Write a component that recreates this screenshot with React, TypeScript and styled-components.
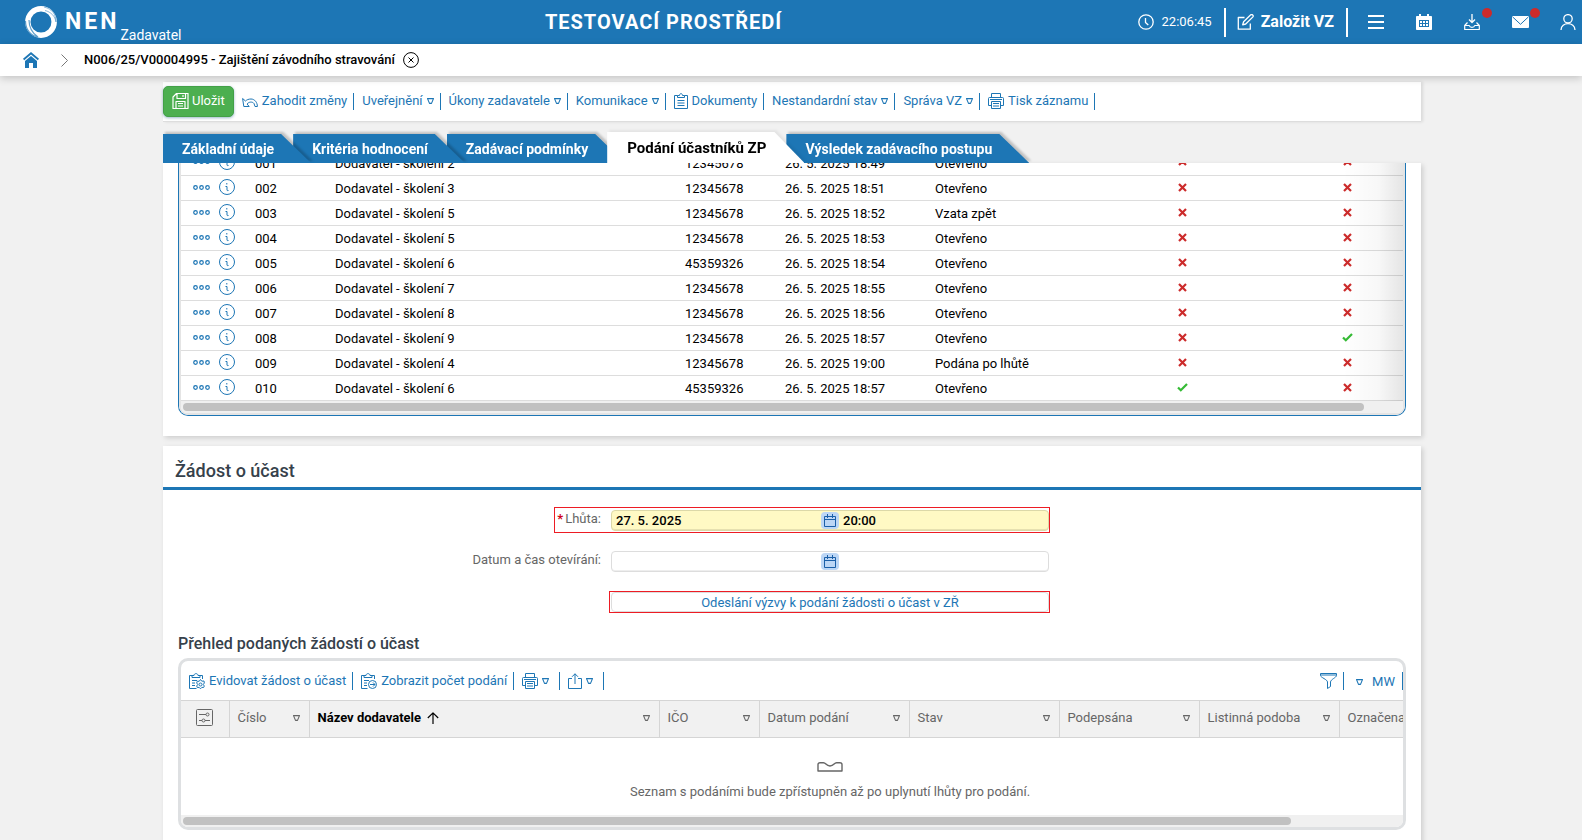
import React from 'react';
import styled, { createGlobalStyle, css } from 'styled-components';

const BLUE = '#1d76b5';
const GREY_BG = '#f1f1f1';

const GlobalStyle = createGlobalStyle`
  *, *::before, *::after { box-sizing: border-box; }
  body {
    margin: 0;
    background: ${GREY_BG};
    color: #000;
    font: 13px/16px Roboto, "Liberation Sans", sans-serif;
  }
  button, input { font: inherit; color: inherit; }
  svg { display: block; flex: none; }
`;

const Page = styled.div`
  display: flex;
  flex-direction: column;
  min-height: 100vh;
`;

/* ---------- header ---------- */

const Header = styled.header`
  display: flex;
  align-items: center;
  justify-content: space-between;
  height: 44px;
  padding: 0 6px 0 24px;
  background: ${BLUE};
  color: #fff;
`;

const Brand = styled.a`
  display: flex;
  align-items: center;
  height: 44px;
  color: inherit;
  text-decoration: none;
`;

const BrandName = styled.span`
  padding-left: 7px;
  font-size: 23px;
  font-weight: 700;
  letter-spacing: 3px;
`;

const BrandRole = styled.span`
  align-self: flex-end;
  padding: 0 8px 1px 1px;
  font-size: 14px;
`;

const EnvTitle = styled.strong`
  font-size: 20px;
  font-weight: 700;
  letter-spacing: 1px;
`;

const HeaderRight = styled.div`
  display: flex;
  align-items: center;
  justify-content: flex-end;
`;

const Clock = styled.div`
  display: flex;
  align-items: center;
  gap: 8px;
  height: 29px;
  padding-right: 12px;
`;

const CreateButton = styled.button`
  display: flex;
  align-items: center;
  gap: 7px;
  height: 29px;
  margin-right: 20px;
  padding: 0 12px 0 11px;
  border: 0;
  border-left: 2px solid #fff;
  border-right: 2px solid #fff;
  background: none;
  font-size: 16px;
  font-weight: 700;
`;

const HeaderIcons = styled.div`
  display: flex;
  gap: 32px;
`;

const HeaderIcon = styled.button<{ $alert?: boolean }>`
  position: relative;
  width: 16px;
  padding: 0;
  border: 0;
  background: none;
  ${p => p.$alert && css`
    &::after {
      content: '';
      position: absolute;
      top: -6px;
      right: -12px;
      width: 10px;
      height: 10px;
      border-radius: 50%;
      background: #cc2b2b;
    }
  `}
`;

/* ---------- breadcrumb ---------- */

const Breadcrumb = styled.nav`
  position: relative;
  z-index: 2;
  display: flex;
  align-items: center;
  height: 32px;
  padding-left: 23px;
  background: #fff;
  box-shadow: 0 2px 8px rgba(0, 0, 0, 0.2);
`;

const Chevron = styled.span`
  padding: 0 16px 0 22px;
`;

const Crumb = styled.a`
  padding-right: 8px;
  color: #000;
  font-weight: 500;
  text-decoration: none;
`;

const PlainButton = styled.button`
  padding: 0;
  border: 0;
  background: none;
`;

/* ---------- page body ---------- */

const Main = styled.main`
  display: flex;
  flex: 1;
  flex-direction: column;
  padding: 6px 161px 0 163px;
`;

const Toolbar = styled.div`
  display: flex;
  align-items: center;
  height: 40px;
  padding-bottom: 1px;
  border-bottom: 1px solid #ddd;
  background: #fff;
  box-shadow: 2px 0 3px rgba(0, 0, 0, 0.1);
`;

const SaveButton = styled.button`
  display: flex;
  align-items: center;
  gap: 3px;
  height: 31px;
  padding: 0 8px;
  border: 1px solid #43a047;
  border-radius: 5px;
  background: #4caf50;
  color: #fff;
  box-shadow: 0 1px 3px rgba(0, 80, 120, 0.4);
`;

const ToolGroup = styled.div`
  display: flex;
  align-items: center;
`;

const Tool = styled.button<{ $tall?: boolean; $loose?: boolean }>`
  display: flex;
  align-items: center;
  gap: 4px;
  height: ${p => (p.$tall ? 18 : 17)}px;
  padding: ${p => (p.$loose ? '0 10px 0 8px' : '0 6px 0 8px')};
  border: 0;
  border-right: 1px solid ${BLUE};
  background: none;
  color: ${BLUE};
  white-space: nowrap;
`;

const ViewTool = styled(Tool)`
  gap: 9px;
  padding: 2px 7px 0 12px;
`;

const Tabs = styled.div`
  display: flex;
  align-items: flex-end;
  height: 41px;
`;

const TabSlot = styled.div<{ $order: number; $active?: boolean }>`
  position: relative;
  z-index: ${p => (p.$active ? 9 : p.$order)};
  & + & { margin-left: -18px; }
  filter: drop-shadow(2px -2px 1px rgba(0, 0, 0, ${p => (p.$active ? 0.05 : 0.2)}));
`;

const Tab = styled.button<{ $active?: boolean }>`
  display: block;
  height: ${p => (p.$active ? 31 : 29)}px;
  padding: ${p => (p.$active ? '1px 38px 0 20px' : '1px 37px 0 19px')};
  border: 0;
  background: ${p => (p.$active ? '#fff' : BLUE)};
  color: ${p => (p.$active ? '#000' : '#fff')};
  font-size: ${p => (p.$active ? 15 : 14)}px;
  font-weight: 700;
  white-space: nowrap;
  clip-path: polygon(0 0, calc(100% - 30px) 0, 100% 100%, 0 100%);
`;

const Panel = styled.section<{ $fill?: boolean }>`
  position: relative;
  z-index: ${p => (p.$fill ? 0 : 1)};
  flex: ${p => (p.$fill ? '1' : 'none')};
  background: #fff;
  box-shadow: 2px 2px 5px rgba(0, 0, 0, 0.15);
  & + & { margin-top: 10px; }
`;

const PanelBody = styled.div`
  padding: 0 15px 20px;
`;

const SubmissionsBox = styled.div`
  overflow: hidden;
  border: 1px solid ${BLUE};
  border-top: 0;
  border-radius: 0 0 10px 10px;
`;

const SubmissionsInner = styled.div`
  position: relative;
  overflow: hidden;
  border: 2px solid #e4e4e4;
  border-top: 0;
  border-radius: 0 0 8px 8px;
`;

const RowsViewport = styled.div`
  position: relative;
  overflow: hidden;
  &::after {
    content: '';
    position: absolute;
    inset: 0 0 0 auto;
    width: 60px;
    background: linear-gradient(to right, transparent, rgba(0, 0, 0, 0.03) 60%, rgba(0, 0, 0, 0.1));
    pointer-events: none;
  }
`;

/* The list is scrolled so that its first row is half hidden under the tabs. */
const SubmissionsTable = styled.table`
  width: 1226px;
  margin-top: -13px;
  border-collapse: collapse;
  table-layout: fixed;
`;

const Cell = styled.td<{ $icons?: boolean; $center?: boolean }>`
  height: 25px;
  padding: ${p => (p.$icons || p.$center ? '0 8px 1px' : '3px 8px 0')};
  border-bottom: 1px solid #ddd;
  text-align: ${p => (p.$center ? 'center' : 'left')};
  white-space: nowrap;
  svg { margin: 0 auto; }
`;

const RowActions = styled.div`
  display: flex;
  align-items: center;
  gap: 9px;
  padding-left: 4px;
`;

const ScrollTrack = styled.div`
  padding: 2px;
  background: #f0f0f0;
`;

const ScrollThumb = styled.div<{ $size: number }>`
  width: ${p => p.$size}%;
  height: 8px;
  border-radius: 4px;
  background: #c1c1c1;
`;

/* ---------- request section ---------- */

const SectionTitle = styled.h2`
  margin: 0;
  padding: 15px 12px 6px;
  border-bottom: 3px solid ${BLUE};
  color: #36414b;
  font-size: 18px;
  font-weight: 500;
  line-height: 20px;
`;

const Form = styled.form`
  display: flex;
  flex-direction: column;
  padding-top: 17px;
`;

const FieldRow = styled.div`
  display: grid;
  grid-template-columns: minmax(0, 431fr) minmax(0, 441fr) minmax(0, 356fr);
  margin-bottom: 15px;
`;

const MarkedField = styled.div<{ $marked?: boolean }>`
  display: grid;
  grid-template-columns: auto 438px;
  justify-self: end;
  grid-column: 1 / 3;
  height: 26px;
  border: 1px solid ${p => (p.$marked ? '#ed1c24' : 'transparent')};
`;

const Label = styled.label`
  padding: 3px 10px 0 2px;
  color: #666;
  text-align: right;
`;

const Required = styled.span`
  padding-right: 2px;
  color: #d0021b;
  font-weight: 700;
`;

const InputFrame = styled.div<{ $required?: boolean }>`
  display: flex;
  align-items: center;
  height: 21px;
  margin-top: 2px;
  border: 1px solid ${p => (p.$required ? '#dcd8a8' : '#ddd')};
  border-radius: 4px;
  background: ${p => (p.$required ? '#fff9c4' : '#fff')};
  box-shadow: inset 0 -1px 0 ${p => (p.$required ? '#e6e0b0' : '#eee')};
`;

const TextInput = styled.input`
  flex: 1;
  min-width: 0;
  width: 0;
  padding: 2px 4px 0;
  border: 0;
  outline: 0;
  background: none;
  font-weight: 500;
`;

const CalendarButton = styled.button`
  display: flex;
  align-items: center;
  justify-content: center;
  width: 18px;
  height: 17px;
  padding: 0;
  border: 0;
  border-radius: 4px;
  background: #bcd6f5;
  color: #1a5fa8;
`;

const SendFrame = styled.div`
  grid-column: 2;
  height: 22px;
  margin-top: 2px;
  border: 1px solid #ed1c24;
`;

const SendButton = styled.button`
  display: block;
  width: 438px;
  height: 20px;
  margin-left: 1px;
  padding: 2px 0 0;
  border: 1px solid #ddd;
  border-radius: 4px;
  background: #fff;
  color: ${BLUE};
`;

const GridTitle = styled.h3`
  margin: 0;
  padding: 7px 0 5px;
  color: #36414b;
  font-size: 16px;
  font-weight: 500;
  line-height: 18px;
`;

const GridBox = styled.div`
  overflow: hidden;
  border: 3px solid #dee0e2;
  border-radius: 10px;
`;

const GridToolbar = styled.div`
  display: flex;
  align-items: center;
  justify-content: space-between;
  height: 39px;
  padding-top: 2px;
`;

const GridTable = styled.table`
  width: 1298px;
  border-collapse: collapse;
  table-layout: fixed;
`;

const HeadCell = styled.th<{ $sorted?: boolean }>`
  height: 37px;
  padding: 0 9px 1px 8px;
  border: 1px solid #d5d5d5;
  border-left: 0;
  background: ${GREY_BG};
  color: #666;
  font-weight: ${p => (p.$sorted ? 700 : 400)};
  text-align: left;
  white-space: nowrap;
`;

const HeadContent = styled.div`
  display: flex;
  align-items: center;
  justify-content: space-between;
`;

const HeadLabel = styled.span<{ $sorted?: boolean }>`
  display: flex;
  align-items: center;
  gap: 6px;
  color: ${p => (p.$sorted ? '#000' : 'inherit')};
`;

const SetupButton = styled(PlainButton)`
  margin: 3px 0 0 7px;
`;

const EmptyState = styled.div`
  display: flex;
  flex-direction: column;
  align-items: center;
  gap: 12px;
  width: 1298px;
  height: 77px;
  padding-top: 24px;
  background: #fff;
  color: #666;
`;

/* ---------- icons ---------- */

type IconProps = { w?: number; h?: number; box?: string; sw?: number; children: React.ReactNode };

const Icon = ({ w = 16, h = 16, box = '0 0 16 16', sw = 1, children }: IconProps) => (
  <svg width={w} height={h} viewBox={box} fill="none" stroke="currentColor" strokeWidth={sw} strokeLinejoin="round" aria-hidden="true">
    {children}
  </svg>
);

const LogoIcon = () => (
  <svg width="34" height="34" viewBox="0 0 34 34" fill="none" aria-hidden="true">
    <circle cx="17" cy="17" r="13.2" stroke="#fff" strokeWidth="5.400" />
    <path d="M1.500 16C1.500 25 7 30.500 14 32C8 28 5 23 5 15" stroke={BLUE} strokeWidth="1.200" opacity=".7" />
    <path d="M20 2C28 4 32 9 32 17C31 11 27 7 21 5.500" stroke={BLUE} strokeWidth="1" opacity=".5" />
    <path d="M28 14C29 20 27 26 20 29C24 28 26.500 25 27.500 21z" fill="#fff" />
  </svg>
);

const ClockIcon = () => (
  <Icon sw={1.300}><circle cx="8" cy="8" r="7.2" /><path d="M7.5 4v4.5l2.8 2.6" /></Icon>
);
const EditIcon = () => (
  <Icon w={17} sw={1.300}><path d="M7 3.5H.8v11.700h12V9.5" /><path d="M5.2 10.8l.9-3L13 1a1.5 1.5 0 012.2 2.1L8.2 10z" /></Icon>
);
const MenuIcon = () => <Icon sw={2}><path d="M0 2h16M0 8h16M0 14h16" /></Icon>;
const CalendarGridIcon = () => (
  <Icon>
    <path d="M.5 2.5h15v13H.5z" fill="#fff" />
    <path d="M4 0v4M12 0v4" strokeWidth="2" />
    <path d="M3 6.5h10M3 9.5h10M3 12.5h10M3.5 6v7M6.5 6v7M9.5 6v7M12.5 6v7" stroke={BLUE} />
  </Icon>
);
const DownloadIcon = () => (
  <Icon sw={1.200}><path d="M8 0v8M5 5.5l3 3 3-3" strokeWidth="1.3" /><path d="M3.5 8.5l-2.8 3v4h14.6v-4l-2.8-3M.7 11.5h4.6c.5 2.4 4.9 2.4 5.4 0h4.6" /></Icon>
);
const MailIcon = () => (
  <Icon w={17} box="0 0 17 16"><rect x="0" y="2" width="17" height="12" rx="1" fill="#fff" stroke="none" /><path d="M.5 2.8l8 7.5 8-7.5" stroke={BLUE} /></Icon>
);
const UserIcon = () => (
  <Icon sw={1.3}><circle cx="8" cy="4.8" r="4.2" /><path d="M1 16c0-8.500 14-8.500 14 0" /></Icon>
);
const HomeIcon = () => (
  <Icon sw={0}>
    <path d="M8 0L0 6.800l1.200 1.400L8 2.600l6.800 5.600L16 6.800z" fill={BLUE} />
    <path d="M8 4L2 9v7h4v-5h4v5h4V9z" fill={BLUE} />
  </Icon>
);
const ChevronIcon = () => <Icon w={7} h={13} box="0 0 7 13"><path d="M.5.5l6 6-6 6" stroke="#777" /></Icon>;
const CloseIcon = () => (
  <Icon><circle cx="8" cy="8" r="7.400" /><path d="M5.500 5.500l5 5M10.500 5.500l-5 5" /></Icon>
);
const SaveIcon = () => (
  <Icon w={17} sw={1.200}><path d="M4 .5h11.500v15H.5V4zM4.500.8v4.700h8.500V.5M10.500 2v2M3.500 15.500v-7h9v7M5.500 10.500h5M5.500 13h5" /></Icon>
);
const UndoIcon = () => (
  <Icon><path d="M.6 5.500l1.200 8h5.400L5 11C7 8.600 10.500 8.500 12 10.500l1 3h2.400c0-4-2.700-7.500-6.400-7.500-2.500 0-4.200.8-5.500 2z" /></Icon>
);
const ClipboardIcon = () => (
  <Icon w={14} box="0 0 14 16"><path d="M3.500 2.500h-3v13h13v-13h-3M3.500 4.500v-2h2c0-2.500 3-2.500 3 0h2v2zM3.500 7.500h7M3.500 10h7M3.500 12.500h7" /></Icon>
);
const PrinterIcon = () => (
  <Icon><path d="M3.500 4V.5h9V4M3.500 12.500h-3v-7q0-1 1-1h13q1 0 1 1v7h-3M3.500 8.500h9v7h-9zM2 6.500h12M5 10.500h6M5 13h6" /></Icon>
);
const ClipGearIcon = () => (
  <Icon>
    <path d="M7.500 15.500h-7v-13h2.500M11 2.500h2.500V6M3 4.500v-2h2c0-2.500 4-2.500 4 0h2v2zM3 7.500h5M3 10h3M3 12.500h3" />
    <path d="M11.500 6.500l1.300 1.700 2.200-.2.300 2-1 1.500 1 1.500-.7 1.500-1.800-.1-1.300 1.400-1.300-1.400-1.900.1-.6-1.500 1-1.500-1-1.500.6-1.800 1.900.1z" />
    <circle cx="11.500" cy="11.500" r="1.500" />
  </Icon>
);
const ClipArrowIcon = () => (
  <Icon>
    <path d="M6.500 15.500h-6v-13h2.500M11 2.500h2.500V6M3 4.500v-2h2c0-2.500 4-2.500 4 0h2v2zM3 7.500h5M3 10h3M3 12.500h3" />
    <circle cx="11.500" cy="11.500" r="4" /><path d="M9 11.500h5M12 9.500l2 2-2 2" />
  </Icon>
);
const ShareIcon = () => (
  <Icon w={14} box="0 0 14 16"><path d="M4 5.500H.5v10h13v-10H10M7 11V.8M4 3.800l3-3 3 3" /></Icon>
);
const FunnelIcon = () => (
  <Icon w={17} box="0 0 17 16"><path d="M.5.5h16v2c0 2-6 4-6 6.500v4.500l-3 2V9C7.500 6.500.5 4.500.5 2.500zM.5 2h16" /></Icon>
);
const Triangle = () => <Icon w={7} h={6} box="0 0 7 6" sw={1.100}><path d="M.5.6h6L4.500 5.400h-2z" /></Icon>;
const SortIcon = () => <Icon w={12} h={12} box="0 0 12 12" sw={1.200}><path d="M6 12V.8M.8 6L6 .8 11.200 6" /></Icon>;
const SetupIcon = () => (
  <Icon w={17} h={17} box="0 0 17 17"><rect x=".5" y=".5" width="16" height="16" rx="1" /><path d="M3 5.500h7M3 11.500h3M9 11.500h5" /><circle cx="11.500" cy="5.500" r="1.500" /><circle cx="7.500" cy="11.500" r="1.500" /></Icon>
);
const TrayIcon = () => (
  <Icon w={26} h={10} box="0 0 26 10" sw={1.400}><path d="M1 2.500Q1 .7 3 .7h3.500C9 .7 9 4 13 4s4-3.300 6.500-3.300H23q2 0 2 1.800V9H1z" /></Icon>
);
const DotsIcon = () => (
  <svg width="17" height="5" viewBox="0 0 17 5" fill="none" stroke={BLUE} strokeWidth="1.200" aria-hidden="true">
    <circle cx="2.500" cy="2.500" r="1.800" /><circle cx="8.500" cy="2.500" r="1.800" /><circle cx="14.500" cy="2.500" r="1.800" />
  </svg>
);
const InfoIcon = () => (
  <svg width="16" height="16" viewBox="0 0 16 16" fill="none" stroke={BLUE} aria-hidden="true">
    <circle cx="8" cy="8" r="7.500" /><path d="M7.800 4v1.500M6.500 7.500h1.500v3.500q0 1 1.500.5" />
  </svg>
);
const CrossMark = () => (
  <svg width="9" height="9" viewBox="0 0 9 9" stroke="#cc2b2b" strokeWidth="2.200" role="img" aria-label="Ne"><path d="M1 1l7 7M8 1L1 8" /></svg>
);
const CheckMark = () => (
  <svg width="11" height="9" viewBox="0 0 11 9" fill="none" stroke="#35bb35" strokeWidth="2.200" role="img" aria-label="Ano"><path d="M1 4.500L3.800 7.300 10 1" /></svg>
);
const SmallCalendarIcon = () => (
  <Icon w={12} h={13} box="0 0 12 13"><path d="M.5 2.500h11v10H.5zM.5 5.500h11M3.500 0v4M8.500 0v4" /></Icon>
);

/* ---------- data ---------- */

const tools: { label: string; icon?: React.ReactNode; menu?: boolean }[] = [
  { label: 'Zahodit změny', icon: <UndoIcon /> },
  { label: 'Uveřejnění', menu: true },
  { label: 'Úkony zadavatele', menu: true },
  { label: 'Komunikace', menu: true },
  { label: 'Dokumenty', icon: <ClipboardIcon /> },
  { label: 'Nestandardní stav', menu: true },
  { label: 'Správa VZ', menu: true },
  { label: 'Tisk záznamu', icon: <PrinterIcon /> },
];

const tabs = ['Základní údaje', 'Kritéria hodnocení', 'Zadávací podmínky', 'Podání účastníků ZP', 'Výsledek zadávacího postupu'];
const activeTab = 3;

type Row = [string, string, string, string, string, boolean, boolean];
const rows: Row[] = [
  ['001', 'Dodavatel - školení 2', '12345678', '26. 5. 2025 18:49', 'Otevřeno', false, false],
  ['002', 'Dodavatel - školení 3', '12345678', '26. 5. 2025 18:51', 'Otevřeno', false, false],
  ['003', 'Dodavatel - školení 5', '12345678', '26. 5. 2025 18:52', 'Vzata zpět', false, false],
  ['004', 'Dodavatel - školení 5', '12345678', '26. 5. 2025 18:53', 'Otevřeno', false, false],
  ['005', 'Dodavatel - školení 6', '45359326', '26. 5. 2025 18:54', 'Otevřeno', false, false],
  ['006', 'Dodavatel - školení 7', '12345678', '26. 5. 2025 18:55', 'Otevřeno', false, false],
  ['007', 'Dodavatel - školení 8', '12345678', '26. 5. 2025 18:56', 'Otevřeno', false, false],
  ['008', 'Dodavatel - školení 9', '12345678', '26. 5. 2025 18:57', 'Otevřeno', false, true],
  ['009', 'Dodavatel - školení 4', '12345678', '26. 5. 2025 19:00', 'Podána po lhůtě', false, false],
  ['010', 'Dodavatel - školení 6', '45359326', '26. 5. 2025 18:57', 'Otevřeno', true, false],
];
const rowColumns = [66, 80, 350, 100, 150, 150, 210, 120];

const gridColumns = ['Číslo', 'Název dodavatele', 'IČO', 'Datum podání', 'Stav', 'Podepsána', 'Listinná podoba', 'Označena'];
const gridWidths = [48, 80, 350, 100, 150, 150, 140, 140, 140];

const Columns = ({ widths }: { widths: number[] }) => (
  <colgroup>{widths.map((w, i) => <col key={i} width={w} />)}</colgroup>
);

export default function App() {
  return (
    <Page>
      <GlobalStyle />
      <Header>
        <Brand href="#">
          <LogoIcon />
          <BrandName>NEN</BrandName>
          <BrandRole>Zadavatel</BrandRole>
        </Brand>
        <EnvTitle>TESTOVACÍ PROSTŘEDÍ</EnvTitle>
        <HeaderRight>
          <Clock><ClockIcon />22:06:45</Clock>
          <CreateButton><EditIcon />Založit VZ</CreateButton>
          <HeaderIcons>
            <HeaderIcon aria-label="Menu"><MenuIcon /></HeaderIcon>
            <HeaderIcon aria-label="Kalendář"><CalendarGridIcon /></HeaderIcon>
            <HeaderIcon aria-label="Stažené soubory" $alert><DownloadIcon /></HeaderIcon>
            <HeaderIcon aria-label="Zprávy" $alert><MailIcon /></HeaderIcon>
            <HeaderIcon aria-label="Uživatel"><UserIcon /></HeaderIcon>
          </HeaderIcons>
        </HeaderRight>
      </Header>

      <Breadcrumb>
        <a href="#" aria-label="Domů"><HomeIcon /></a>
        <Chevron><ChevronIcon /></Chevron>
        <Crumb href="#">N006/25/V00004995 - Zajištění závodního stravování</Crumb>
        <PlainButton aria-label="Zavřít"><CloseIcon /></PlainButton>
      </Breadcrumb>

      <Main>
        <Toolbar>
          <SaveButton><SaveIcon />Uložit</SaveButton>
          {tools.map(t => (
            <Tool key={t.label}>{t.icon}{t.label}{t.menu && <Triangle />}</Tool>
          ))}
        </Toolbar>

        <Tabs role="tablist">
          {tabs.map((label, i) => (
            <TabSlot key={label} $order={tabs.length - i} $active={i === activeTab}>
              <Tab role="tab" aria-selected={i === activeTab} $active={i === activeTab}>{label}</Tab>
            </TabSlot>
          ))}
        </Tabs>

        <Panel>
          <PanelBody>
            <SubmissionsBox>
              <SubmissionsInner>
                <RowsViewport>
                  <SubmissionsTable>
                    <Columns widths={rowColumns} />
                    <tbody>
                      {rows.map(([id, name, ico, date, state, signed, paper]) => (
                        <tr key={id}>
                          <Cell $icons>
                            <RowActions>
                              <PlainButton aria-label="Akce"><DotsIcon /></PlainButton>
                              <PlainButton aria-label="Detail"><InfoIcon /></PlainButton>
                            </RowActions>
                          </Cell>
                          <Cell>{id}</Cell>
                          <Cell>{name}</Cell>
                          <Cell>{ico}</Cell>
                          <Cell>{date}</Cell>
                          <Cell>{state}</Cell>
                          <Cell $center>{signed ? <CheckMark /> : <CrossMark />}</Cell>
                          <Cell $center>{paper ? <CheckMark /> : <CrossMark />}</Cell>
                        </tr>
                      ))}
                    </tbody>
                  </SubmissionsTable>
                </RowsViewport>
                <ScrollTrack><ScrollThumb $size={97} /></ScrollTrack>
              </SubmissionsInner>
            </SubmissionsBox>
          </PanelBody>
        </Panel>

        <Panel $fill>
          <SectionTitle>Žádost o účast</SectionTitle>
          <PanelBody>
            <Form onSubmit={e => e.preventDefault()}>
              <FieldRow>
                <MarkedField $marked>
                  <Label htmlFor="deadline"><Required>*</Required>Lhůta:</Label>
                  <InputFrame $required>
                    <TextInput id="deadline" defaultValue="27. 5. 2025" />
                    <CalendarButton type="button" aria-label="Vybrat datum lhůty"><SmallCalendarIcon /></CalendarButton>
                    <TextInput aria-label="Čas lhůty" defaultValue="20:00" />
                  </InputFrame>
                </MarkedField>
              </FieldRow>
              <FieldRow>
                <MarkedField>
                  <Label htmlFor="opening">Datum a čas otevírání:</Label>
                  <InputFrame>
                    <TextInput id="opening" />
                    <CalendarButton type="button" aria-label="Vybrat datum otevírání"><SmallCalendarIcon /></CalendarButton>
                    <TextInput aria-label="Čas otevírání" />
                  </InputFrame>
                </MarkedField>
              </FieldRow>
              <FieldRow>
                <SendFrame>
                  <SendButton>Odeslání výzvy k podání žádosti o účast v ZŘ</SendButton>
                </SendFrame>
              </FieldRow>
            </Form>

            <GridTitle>Přehled podaných žádostí o účast</GridTitle>
            <GridBox>
              <GridToolbar>
                <ToolGroup>
                  <Tool $tall><ClipGearIcon />Evidovat žádost o účast</Tool>
                  <Tool $tall><ClipArrowIcon />Zobrazit počet podání</Tool>
                  <Tool $tall $loose aria-label="Tisk"><PrinterIcon /><Triangle /></Tool>
                  <Tool $tall $loose aria-label="Export"><ShareIcon /><Triangle /></Tool>
                </ToolGroup>
                <ToolGroup>
                  <Tool $tall aria-label="Filtr"><FunnelIcon /></Tool>
                  <ViewTool $tall><Triangle />MW</ViewTool>
                </ToolGroup>
              </GridToolbar>
              <GridTable>
                <Columns widths={gridWidths} />
                <thead>
                  <tr>
                    <HeadCell><SetupButton aria-label="Nastavení sloupců"><SetupIcon /></SetupButton></HeadCell>
                    {gridColumns.map((c, i) => (
                      <HeadCell key={c} $sorted={i === 1}>
                        <HeadContent>
                          <HeadLabel $sorted={i === 1}>{c}{i === 1 && <SortIcon />}</HeadLabel>
                          <Triangle />
                        </HeadContent>
                      </HeadCell>
                    ))}
                  </tr>
                </thead>
              </GridTable>
              <EmptyState>
                <TrayIcon />
                Seznam s podáními bude zpřístupněn až po uplynutí lhůty pro podání.
              </EmptyState>
              <ScrollTrack><ScrollThumb $size={91} /></ScrollTrack>
            </GridBox>
          </PanelBody>
        </Panel>
      </Main>
    </Page>
  );
}
